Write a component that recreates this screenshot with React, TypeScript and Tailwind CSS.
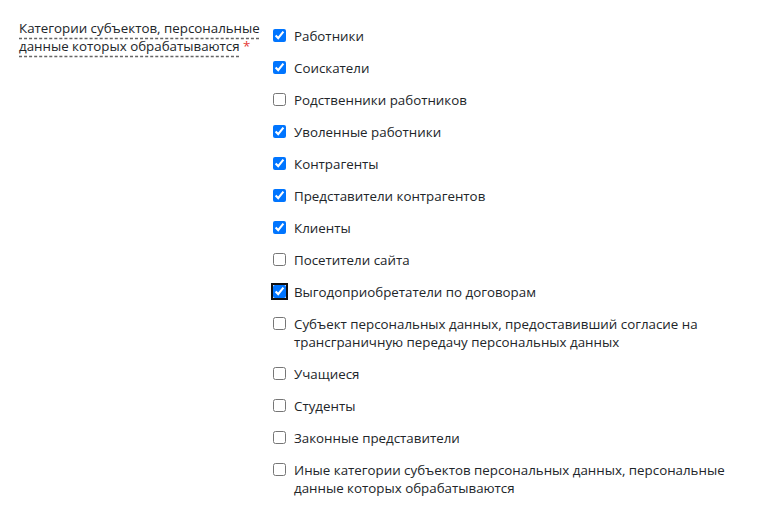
import React from 'react';

const items = [
    { label: 'Работники', checked: true },
    { label: 'Соискатели', checked: true },
    { label: 'Родственники работников', checked: false },
    { label: 'Уволенные работники', checked: true },
    { label: 'Контрагенты', checked: true },
    { label: 'Представители контрагентов', checked: true },
    { label: 'Клиенты', checked: true },
    { label: 'Посетители сайта', checked: false },
    { label: 'Выгодоприобретатели по договорам', checked: true, focused: true },
    { label: 'Субъект персональных данных, предоставивший согласие на трансграничную передачу персональных данных', checked: false },
    { label: 'Учащиеся', checked: false },
    { label: 'Студенты', checked: false },
    { label: 'Законные представители', checked: false },
    { label: 'Иные категории субъектов персональных данных, персональные данные которых обрабатываются', checked: false },
];

const App: React.FC = () => {
    return (
        <div className="min-h-screen bg-white pl-[19px] pr-[20px] pt-[19px] text-[13.33px] leading-[18px] text-[#212529]" style={{ fontFamily: '"Open Sans", "Noto Sans", sans-serif' }}>
            <div className="flex">
                <div className="w-[254px] shrink-0 pr-2">
                    <span className="underline decoration-dashed decoration-[#666] underline-offset-[5px]">
                        Категории субъектов, персональные данные которых обрабатываются
                    </span>{' '}
                    <span className="text-[#e53935]">*</span>
                </div>
                <div className="flex flex-col gap-[14px] pt-[8px]">
                    {items.map((it, i) => (
                        <label key={i} className="flex items-start gap-[8px]">
                            <input
                                type="checkbox"
                                defaultChecked={it.checked}
                                className={
                                    'm-0 mt-[2px] h-[13px] w-[13px] shrink-0 accent-[#0075ff] ' +
                                    (it.focused ? 'rounded-[3px] outline-2 outline-offset-0 outline-[#101010]' : '')
                                }
                            />
                            <span>{it.label}</span>
                        </label>
                    ))}
                </div>
            </div>
        </div>
    );
};

export default App;
